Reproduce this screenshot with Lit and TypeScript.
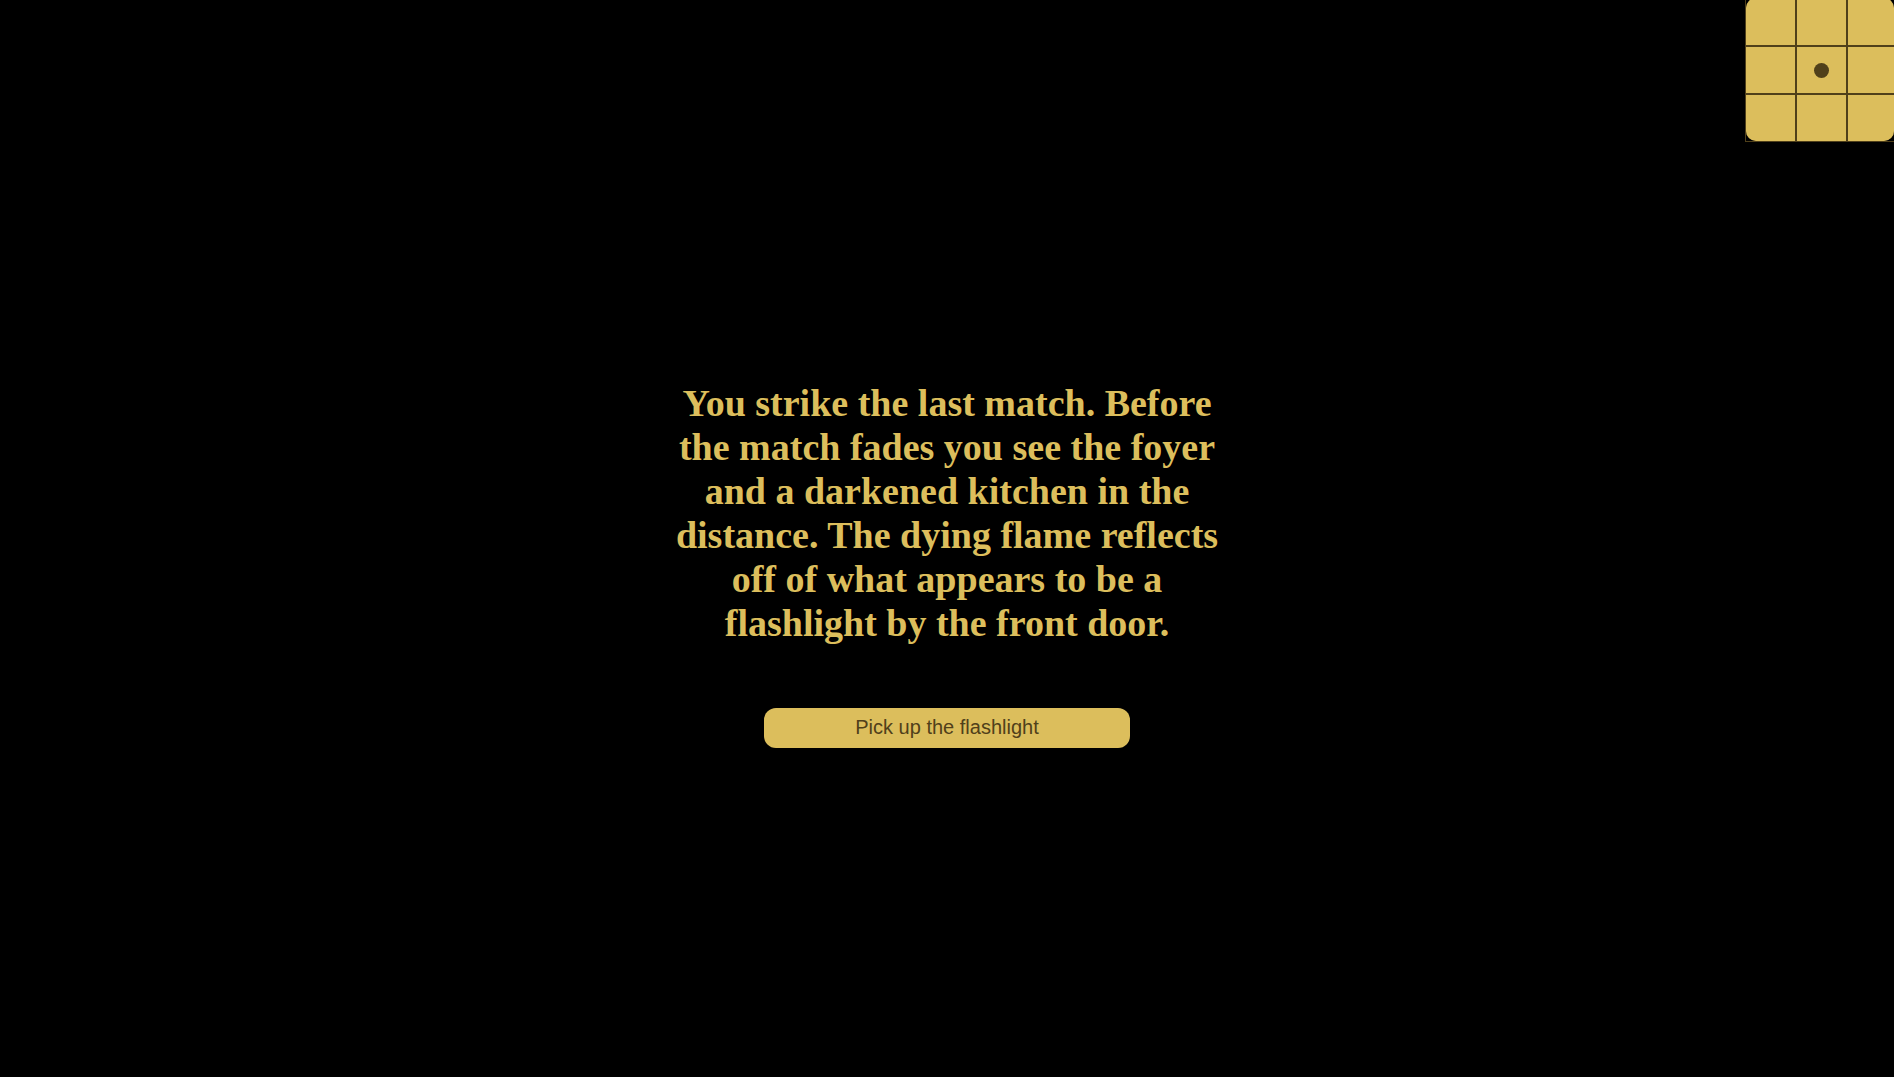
import { LitElement, html, css } from "lit";
import { customElement, property, state } from "lit/decorators.js";

@customElement("room-map")
class RoomMap extends LitElement {
  @property({ type: Number }) current = 4;

  static styles = css`
    :host {
      display: block;
      border: solid #50401a;
      border-width: 0 0 1px 1px;
    }
    .clip {
      overflow: hidden;
    }
    .board {
      display: grid;
      grid-template-columns: 49px 49px 46px;
      grid-template-rows: 47px 46px 46px;
      gap: 2px;
      margin-top: -2px;
      background: #50401a;
      border-radius: 10px;
      overflow: hidden;
    }
    .room {
      display: grid;
      place-items: center;
      background: #dcbe5c;
    }
    .marker {
      width: 15px;
      height: 15px;
      border-radius: 50%;
      background: #50401a;
    }
  `;

  render() {
    return html`<div class="clip">
      <div class="board">
        ${Array.from(
          { length: 9 },
          (_, i) => html`<div class="room">
            ${i === this.current ? html`<span class="marker"></span>` : ""}
          </div>`
        )}
      </div>
    </div>`;
  }
}

@customElement("app-root")
class AppRoot extends LitElement {
  @state() private room = 4;

  static styles = css`
    :host {
      display: block;
      min-height: 100vh;
      background: #000;
      color: #dcbe5c;
    }
    .top {
      display: flex;
      justify-content: flex-end;
    }
    .scene {
      display: flex;
      flex-direction: column;
      align-items: center;
      gap: 63px;
      padding: 239px 16px 64px;
    }
    .story {
      width: 30%;
      min-width: 280px;
      margin: 0;
      font: bold 38px/44px "Liberation Serif", "Times New Roman", serif;
      text-align: center;
    }
    .action {
      width: 366px;
      max-width: 100%;
      height: 40px;
      padding: 0 0 2px;
      border: 0;
      border-radius: 12px;
      background: #dcbe5c;
      color: #50401a;
      font: 20px/24px "Liberation Sans", Arial, sans-serif;
      cursor: pointer;
    }
  `;

  render() {
    return html`
      <header class="top"><room-map .current=${this.room}></room-map></header>
      <main class="scene">
        <h1 class="story">
          You strike the last match. Before the match fades you see the foyer
          and a darkened kitchen in the distance. The dying flame reflects off
          of what appears to be a flashlight by the front door.
        </h1>
        <button class="action" type="button">Pick up the flashlight</button>
      </main>
    `;
  }
}
